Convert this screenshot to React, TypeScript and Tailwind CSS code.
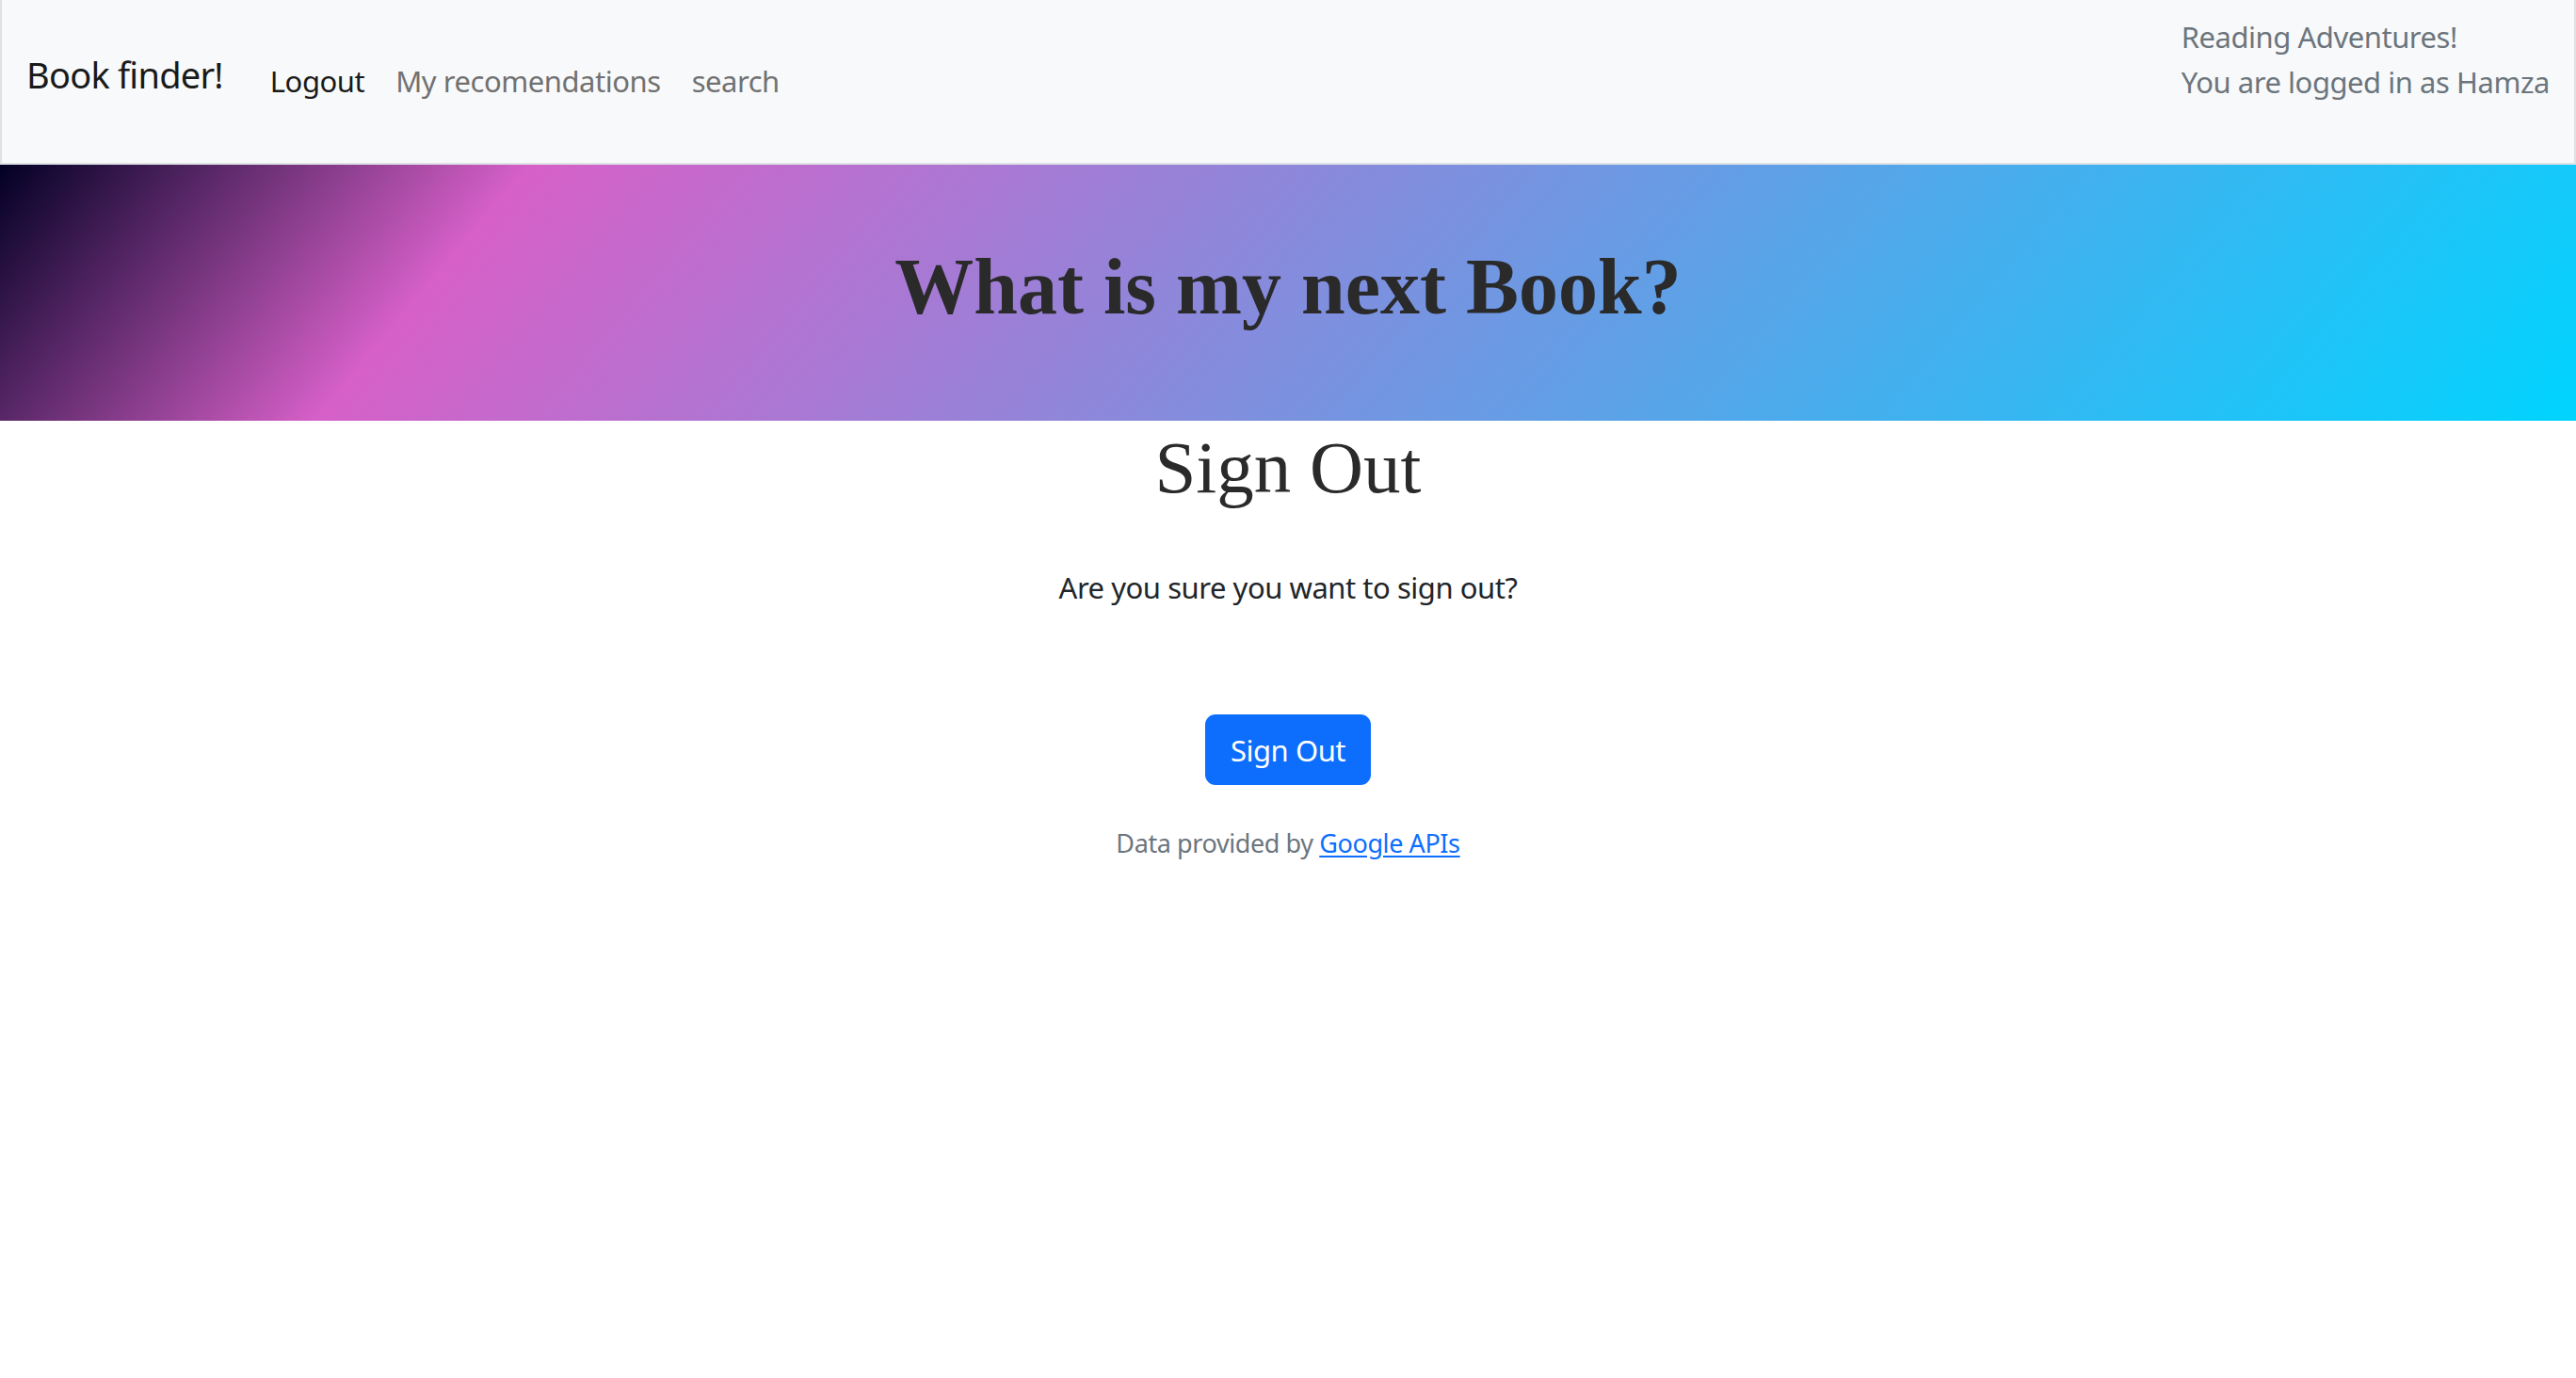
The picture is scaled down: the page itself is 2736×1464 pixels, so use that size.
import React from "react";

const sans = "font-['Noto_Sans',sans-serif]";
const serif = "font-['Liberation_Serif',serif]";

function NavBar() {
  return (
    <nav
      className={`${sans} h-[175px] bg-[#f8f9fa] border-x-2 border-b-2 border-[#dee2e6] flex items-start justify-between px-[26px]`}
    >
      <div className="flex items-start">
        <a className="pt-[59px] text-[38px] leading-[40px] tracking-[-0.02em] text-[#1a1a1a] cursor-pointer">
          Book finder!
        </a>
        <div className="flex items-start gap-[33px] ml-[50px] pt-[70px] text-[31px] leading-[32px] tracking-[-0.015em]">
          <a className="text-[#1a1a1a] cursor-pointer">Logout</a>
          <a className="text-[#717172] cursor-pointer">My recomendations</a>
          <a className="text-[#717172] cursor-pointer">search</a>
        </div>
      </div>
      <div className="pt-[15px] text-[31px] leading-[48px] tracking-[-0.015em] text-[#6c757d]">
        <div>Reading Adventures!</div>
        <div>You are logged in as Hamza</div>
      </div>
    </nav>
  );
}

export default function App() {
  return (
    <div className="min-h-screen bg-white">
      <NavBar />
      <header className="h-[272px] pt-[88px] bg-[linear-gradient(130deg,#020024_0%,#d660c8_19%,#00d4ff_100%)]">
        <h1 className={`${serif} text-center text-[84px] leading-[84px] font-bold text-[#2a2a2a]`}>
          What is my next Book?
        </h1>
      </header>
      <main className="flex flex-col items-center">
        <h2 className={`${serif} mt-[10px] text-[79px] leading-[79px] text-[#2a2a2a]`}>Sign Out</h2>
        <p className={`${sans} mt-[64px] text-[31px] leading-[48px] tracking-[-0.015em] text-[#212529]`}>
          Are you sure you want to sign out?
        </p>
        <button
          className={`${sans} mt-[111px] h-[75px] w-[176px] flex items-center justify-center rounded-[11px] bg-[#0d6efd] text-white text-[31px] leading-[48px] tracking-[-0.015em] cursor-pointer`}
        >
          Sign Out
        </button>
        <p className={`${sans} mt-[41px] text-[27px] leading-[42px] tracking-[-0.015em] text-[#6c757d]`}>
          Data provided by{" "}
          <a className="text-[#0d6efd] underline underline-offset-[3px] cursor-pointer">Google APIs</a>
        </p>
      </main>
    </div>
  );
}
